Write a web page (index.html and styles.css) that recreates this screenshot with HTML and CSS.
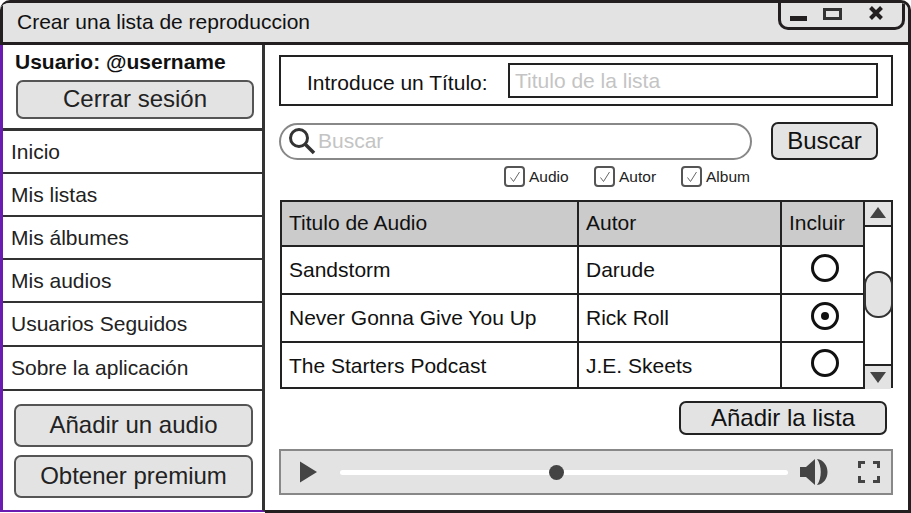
FILE: index.html
```html
<!doctype html>
<html lang="es">
<head>
    <meta charset="UTF-8">
    <title>Crear una lista de reproduccion</title>
    <link rel="stylesheet" href="styles.css">
</head>
<body>
    <div class="window">
        <div class="titlebar">
            <span class="title">Crear una lista de reproduccion</span>
            <div class="controls">
                <span class="ctl-min"></span>
                <span class="ctl-max"></span>
                <svg class="ctl-close" width="16" height="16" viewBox="0 0 16 16"><path d="M2.5 2.5L13.5 13.5M13.5 2.5L2.5 13.5" stroke="#231f20" stroke-width="4"/></svg>
            </div>
        </div>
        <div class="content">
            <div class="sidebar">
                <div class="user-box">
                    <div class="user-name">Usuario: @username</div>
                    <div class="btn btn-side btn-logout">Cerrar sesión</div>
                </div>
                <div class="nav-item">Inicio</div>
                <div class="nav-item">Mis listas</div>
                <div class="nav-item">Mis álbumes</div>
                <div class="nav-item">Mis audios</div>
                <div class="nav-item">Usuarios Seguidos</div>
                <div class="nav-item">Sobre la aplicación</div>
                <div class="side-actions">
                    <div class="btn btn-side">Añadir un audio</div>
                    <div class="btn btn-side">Obtener premium</div>
                </div>
            </div>
            <div class="main">
                <div class="title-box">
                    <span class="title-label">Introduce un Título:</span>
                    <div class="title-input">Titulo de la lista</div>
                </div>
                <div class="search-row">
                    <div class="search">
                        <svg width="30" height="30" viewBox="0 0 30 30"><circle cx="12" cy="12" r="8.5" fill="none" stroke="#333" stroke-width="3"/><path d="M18 18L27 27" stroke="#333" stroke-width="3.5"/></svg>
                        <span>Buscar</span>
                    </div>
                    <div class="btn btn-search">Buscar</div>
                </div>
                <div class="filters">
                    <div class="filter filter-audio"><span class="check"><svg width="12" height="12" viewBox="0 0 12 12"><path d="M1.5 6.5L4.5 10.5L10.5 1" fill="none" stroke="#666" stroke-width="1"/></svg></span>Audio</div>
                    <div class="filter filter-autor"><span class="check"><svg width="12" height="12" viewBox="0 0 12 12"><path d="M1.5 6.5L4.5 10.5L10.5 1" fill="none" stroke="#666" stroke-width="1"/></svg></span>Autor</div>
                    <div class="filter"><span class="check"><svg width="12" height="12" viewBox="0 0 12 12"><path d="M1.5 6.5L4.5 10.5L10.5 1" fill="none" stroke="#666" stroke-width="1"/></svg></span>Album</div>
                </div>
                <div class="table-row">
                    <table class="audios">
                        <thead>
                            <tr><th class="col-title">Titulo de Audio</th><th class="col-author">Autor</th><th class="col-inc">Incluir</th></tr>
                        </thead>
                        <tbody>
                            <tr class="row-1"><td>Sandstorm</td><td>Darude</td><td class="cell-radio"><span class="radio"></span></td></tr>
                            <tr class="row-2"><td>Never Gonna Give You Up</td><td>Rick Roll</td><td class="cell-radio"><span class="radio radio-on"></span></td></tr>
                            <tr class="row-3"><td>The Starters Podcast</td><td>J.E. Skeets</td><td class="cell-radio"><span class="radio"></span></td></tr>
                        </tbody>
                    </table>
                    <div class="scrollbar">
                        <div class="arrow arrow-up"><span></span></div>
                        <div class="thumb"></div>
                        <div class="arrow arrow-down"><span></span></div>
                    </div>
                </div>
                <div class="add-row">
                    <div class="btn btn-add">Añadir la lista</div>
                </div>
                <div class="player">
                    <svg class="play" width="18" height="22" viewBox="0 0 18 22"><path d="M0 0.500L17 11L0 21.500Z" fill="#444"/></svg>
                    <div class="track"><span class="knob"></span></div>
                    <svg class="volume" width="28" height="28" viewBox="0 0 28 28"><path d="M0 9H6L15 1V27L6 19H0Z" fill="#444"/><path d="M17 1C31 3 31 25 17 27C22 20 22 8 17 1Z" fill="#444"/></svg>
                    <svg class="full" width="22" height="22" viewBox="0 0 22 22"><path d="M1.500 7V1.500H7M15 1.500H20.500V7M20.500 15V20.500H15M7 20.500H1.500V15" fill="none" stroke="#444" stroke-width="3"/></svg>
                </div>
            </div>
        </div>
    </div>
</body>
</html>
```

FILE: styles.css
```css
* {
    box-sizing: border-box;
}
html, body {
    margin: 0;
    padding: 0;
    background: #fff;
}
body {
    width: 911px;
    height: 513px;
    overflow: hidden;
    font-family: "Liberation Sans", Arial, sans-serif;
    color: #111;
}
.window {
    width: 911px;
    height: 513px;
    display: flex;
    flex-direction: column;
    border-top: 3px solid #231f20;
    border-right: 3px solid #231f20;
    border-radius: 10px 10px 0 0;
    overflow: hidden;
}
.titlebar {
    height: 42px;
    flex: none;
    display: flex;
    align-items: flex-start;
    justify-content: space-between;
    background: #e3e3e3;
    border-left: 3px solid #231f20;
    border-bottom: 3px solid #231f20;
}
.title {
    margin: 6px 0 0 14px;
    font-size: 21px;
    line-height: 26px;
}
.controls {
    width: 127px;
    height: 28px;
    margin: -1px 3px 0 0;
    display: flex;
    align-items: center;
    border: 3px solid #231f20;
    border-top: 0;
    border-radius: 0 0 10px 10px;
}
.ctl-min {
    width: 17px;
    height: 5px;
    margin: 8px 0 0 9px;
    background: #231f20;
}
.ctl-max {
    width: 19px;
    height: 12px;
    margin: -2px 0 0 16px;
    border: 3px solid #333;
}
.ctl-close {
    margin: -4px 0 0 26px;
}
.content {
    flex: 1;
    min-height: 0;
    display: flex;
}
.sidebar {
    width: 265px;
    flex: none;
    display: flex;
    flex-direction: column;
    border-right: 3px solid #333;
    border-left: 3px solid #6a1bb0;
    border-bottom: 2px solid #6a1bb0;
    margin-bottom: 1px;
}
.user-box {
    height: 86px;
    padding: 4px 8px 0 11px;
    border-bottom: 3px solid #333;
}
.user-name {
    font-size: 21px;
    line-height: 26px;
    font-weight: bold;
    margin-left: 1px;
}
.btn {
    display: flex;
    align-items: center;
    justify-content: center;
    background: #e3e3e3;
    border: 2px solid #555;
    border-radius: 7px;
    color: #222;
}
.btn-side {
    width: 239px;
    font-size: 24px;
}
.btn-logout {
    width: 238px;
    height: 39px;
    margin: 5px 0 0 2px;
    padding-bottom: 1px;
}
.nav-item {
    height: 43px;
    padding: 8px 0 0 8px;
    font-size: 21px;
    line-height: 26px;
    color: #222;
    border-bottom: 2.500px solid #333;
}
.nav-item:nth-child(n+6) {
    height: 44px;
}
.side-actions {
    flex: 1;
    padding: 13px 0 0 11px;
    display: flex;
    flex-direction: column;
    gap: 8px;
}
.side-actions .btn {
    height: 43px;
    padding-bottom: 2px;
}
.main {
    flex: 1;
    min-width: 0;
    padding: 10px 15px 0 14px;
    display: flex;
    flex-direction: column;
    border-bottom: 3px solid #231f20;
}
.title-box {
    height: 51px;
    display: flex;
    align-items: center;
    border: 2px solid #222;
}
.title-label {
    width: 227px;
    padding: 4px 0 0 26px;
    font-size: 21px;
}
.title-input {
    width: 370px;
    height: 35px;
    padding-left: 5px;
    border: 2px solid #222;
    font-size: 21px;
    line-height: 31px;
    color: #c4c4c4;
}
.search-row {
    margin-top: 16px;
    display: flex;
    align-items: center;
}
.search {
    width: 473px;
    height: 37px;
    display: flex;
    align-items: center;
    gap: 1px;
    padding-left: 6px;
    border: 2px solid #888;
    border-radius: 19px;
    font-size: 21px;
    color: #c4c4c4;
}
.btn-search {
    width: 107px;
    height: 38px;
    margin-left: 19px;
    font-size: 24px;
    border-color: #222;
    color: #111;
}
.filters {
    margin-top: 5px;
    height: 23px;
    padding-left: 225px;
    display: flex;
    align-items: center;
    font-size: 15.500px;
    color: #222;
}
.filter {
    display: flex;
    align-items: center;
    gap: 4px;
}
.filter-audio {
    width: 90px;
}
.filter-autor {
    width: 87px;
}
.check {
    width: 21px;
    height: 21px;
    display: flex;
    align-items: center;
    justify-content: center;
    border: 2px solid #555;
    border-radius: 4px;
}
.table-row {
    margin-top: 12px;
    display: flex;
}
.audios {
    width: 585px;
    height: 187px;
    margin-left: 1px;
    table-layout: fixed;
    border-collapse: collapse;
    font-size: 21px;
}
.audios th, .audios td {
    padding: 0 0 0 7px;
    text-align: left;
    font-weight: normal;
    border: 2px solid #222;
}
.audios th {
    height: 45px;
    padding-bottom: 2px;
    background: #cbcbcb;
}
.audios tr.row-1 td, .audios tr.row-2 td {
    height: 48px;
}
.audios tr.row-3 td {
    height: 46px;
    padding-top: 2px;
}
.col-title {
    width: 297px;
}
.col-author {
    width: 203px;
}
.audios .cell-radio {
    padding: 0 0 0 4px;
    text-align: center;
}
.audios tr.row-3 .cell-radio {
    padding-top: 0;
}
.radio {
    display: inline-flex;
    align-items: center;
    justify-content: center;
    width: 28px;
    height: 28px;
    margin-top: -6px;
    vertical-align: middle;
    border: 3px solid #111;
    border-radius: 50%;
}
.radio-on::after {
    content: "";
    width: 8px;
    height: 8px;
    border-radius: 50%;
    background: #111;
}
.scrollbar {
    width: 28px;
    height: 188px;
    display: flex;
    flex-direction: column;
    border: 2px solid #222;
    border-left: 0;
}
.arrow {
    height: 25px;
    flex: none;
    display: flex;
    align-items: center;
    justify-content: center;
    background: #e3e3e3;
}
.arrow-up {
    border-bottom: 2px solid #222;
}
.arrow-down {
    border-top: 2px solid #222;
}
.arrow span {
    width: 0;
    height: 0;
    border-left: 8px solid transparent;
    border-right: 8px solid transparent;
}
.arrow-up span {
    margin-bottom: 2px;
    border-bottom: 11px solid #444;
}
.arrow-down span {
    border-top: 11px solid #444;
}
.thumb {
    width: 29px;
    height: 47px;
    margin: 44px 0 46px -1px;
    flex: none;
    background: #e3e3e3;
    border: 2px solid #333;
    border-radius: 14px;
}
.add-row {
    margin-top: 12px;
    display: flex;
    justify-content: flex-end;
    padding-right: 6px;
}
.btn-add {
    width: 208px;
    height: 34px;
    padding-bottom: 1px;
    font-size: 24px;
    border-color: #222;
    color: #111;
}
.player {
    margin-top: 14px;
    height: 46px;
    display: flex;
    align-items: center;
    background: #e3e3e3;
    border: 2px solid #888;
}
.play {
    margin-left: 19px;
    flex: none;
}
.track {
    width: 448px;
    height: 5px;
    margin-left: 22px;
    position: relative;
    background: #fff;
    border-radius: 3px;
}
.knob {
    position: absolute;
    left: 209px;
    top: -5px;
    width: 15px;
    height: 15px;
    border-radius: 50%;
    background: #444;
}
.volume {
    margin-left: 12px;
    flex: none;
}
.full {
    margin-left: 30px;
    flex: none;
}
```
